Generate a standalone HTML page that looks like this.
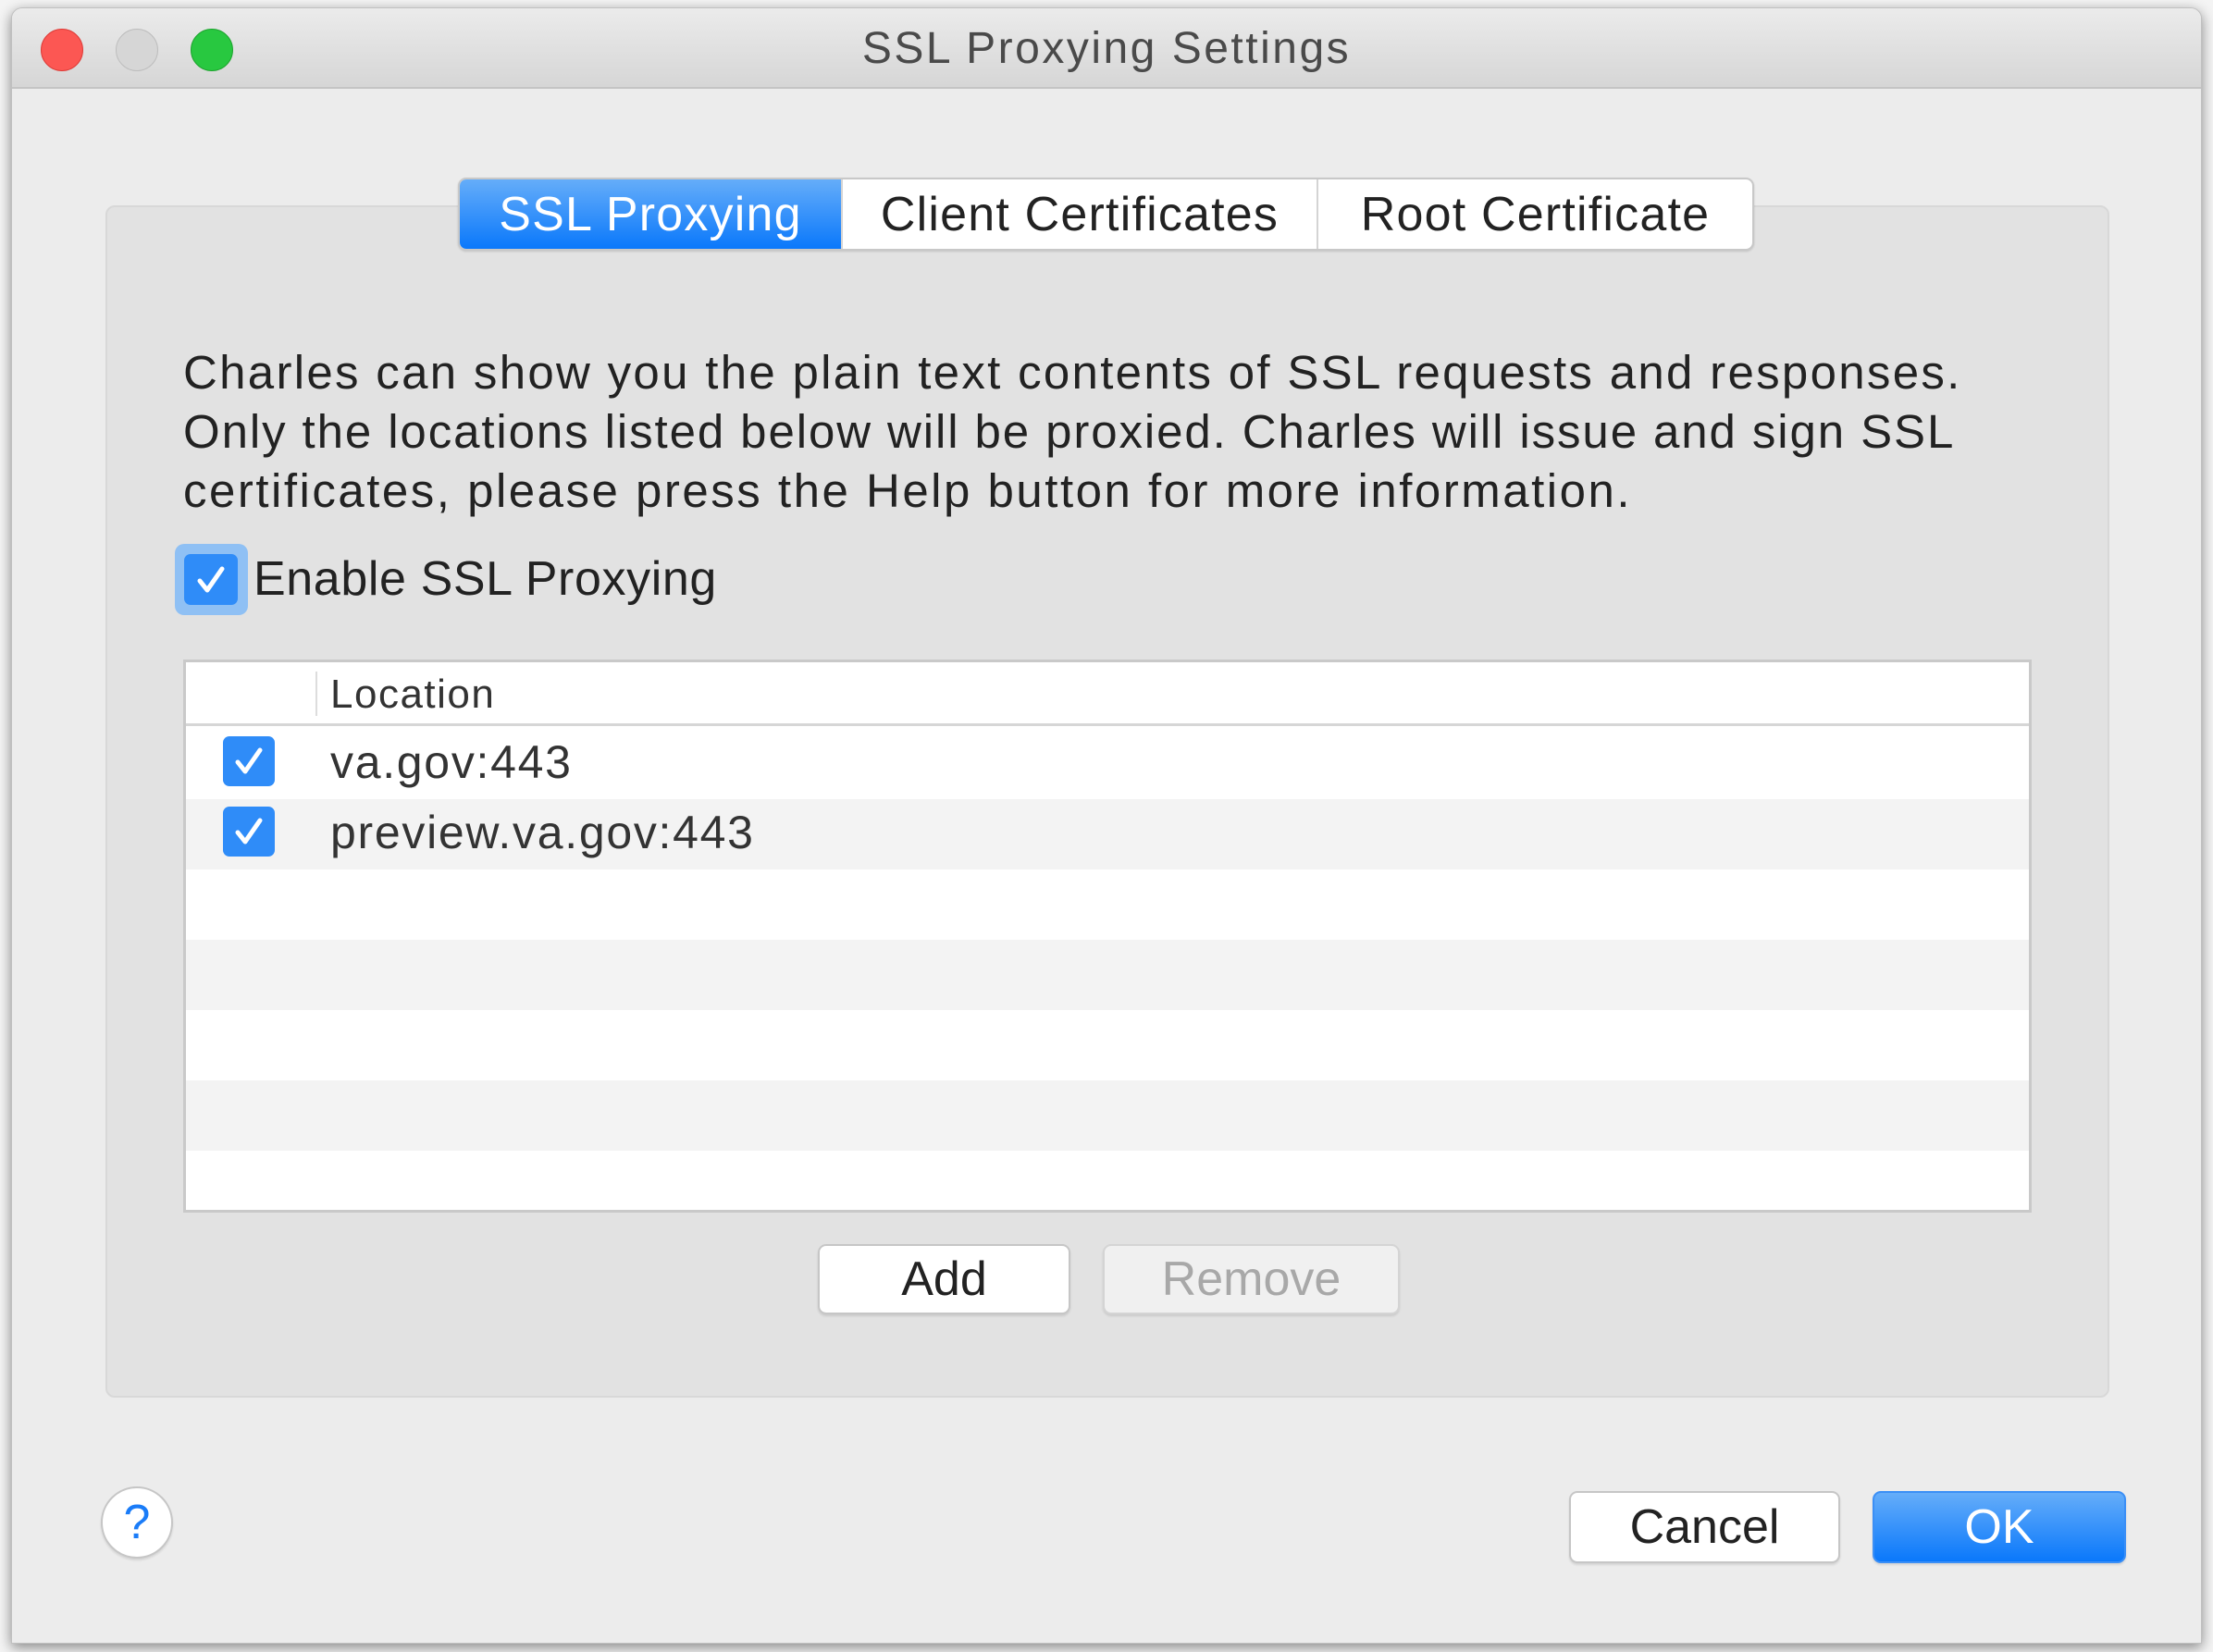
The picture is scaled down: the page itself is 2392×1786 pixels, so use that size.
<!DOCTYPE html>
<html><head><meta charset="utf-8"><style>
*{box-sizing:border-box;margin:0;padding:0}
body{width:2392px;height:1786px;background:#f4f4f4;position:relative;overflow:hidden;font-family:"Liberation Sans",sans-serif;color:#222}
.win{position:absolute;left:12px;top:8px;width:2368px;height:1769px;background:#ececec;border-radius:12px 12px 0 0;box-shadow:0 4px 14px rgba(0,0,0,.45);overflow:hidden;border:1px solid #c0c0c0}
.title{position:absolute;left:0;top:0;right:0;height:87px;background:linear-gradient(#ebebeb,#d6d6d6);border-bottom:2px solid #c4c4c4;text-align:center;font-size:48px;line-height:87px;color:#4a4a4a;letter-spacing:2.5px}
.dot{position:absolute;top:22px;width:46px;height:46px;border-radius:50%}
.abs{position:absolute}
.group{left:101px;top:213px;width:2166px;height:1289px;background:#e2e2e2;border:2px solid #d8d8d8;border-radius:10px}
.tabs{left:482px;top:183px;height:79px;width:1401px;display:flex;border:2px solid #c8c8c8;border-radius:9px;background:#fff;overflow:hidden;font-size:52px;box-shadow:0 1px 2px rgba(0,0,0,.15);letter-spacing:1.2px}
.tab{display:flex;align-items:center;justify-content:center;border-right:2px solid #d4d4d4}
.para{left:185px;top:362px;font-size:51px;line-height:64px;color:#222;letter-spacing:2.3px;white-space:nowrap}
.cb{background:#2f8cf8;border-radius:7px;display:flex;align-items:center;justify-content:center}
.table{left:185px;top:704px;width:1998px;height:598px;background:#fff;border:3px solid #c9c9c9}
.row{position:absolute;left:0;right:0;height:76px}
.btn{position:absolute;background:#fff;border:2px solid #c6c6c6;border-radius:9px;font-size:52px;display:flex;align-items:center;justify-content:center;box-shadow:0 2px 2px rgba(0,0,0,.1)}
</style></head><body>
<div class="win">
 <div class="title">SSL Proxying Settings
  <div class="dot" style="left:31px;background:#fc5753;border:1px solid #de3c38"></div>
  <div class="dot" style="left:112px;background:#d6d6d6;border:1px solid #bdbdbd"></div>
  <div class="dot" style="left:193px;background:#28c840;border:1px solid #1ea52f"></div>
 </div>
 <div class="abs group"></div>
 <div class="abs tabs">
  <div class="tab" style="width:414px;background:linear-gradient(#65adf9,#0a78fb);color:#fff">SSL Proxying</div>
  <div class="tab" style="width:514px">Client Certificates</div>
  <div class="tab" style="flex:1;border-right:0">Root Certificate</div>
 </div>
 <div class="abs para">Charles can show you the plain text contents of SSL requests and responses.<br><span style="letter-spacing:1.9px">Only the locations listed below will be proxied. Charles will issue and sign SSL</span><br><span style="letter-spacing:2.5px">certificates, please press the Help button for more information.</span></div>
 <div class="abs" style="left:176px;top:579px;width:79px;height:77px;background:#8fc0f4;border-radius:10px"></div>
 <div class="abs cb" style="left:186px;top:590px;width:58px;height:55px"><svg width="40" height="40" viewBox="0 0 40 40"><path d="M8 21 L16 31 L32 8" fill="none" stroke="#fff" stroke-width="5" stroke-linecap="round" stroke-linejoin="round"/></svg></div>
 <div class="abs" style="left:261px;top:585px;font-size:52px;line-height:64px;letter-spacing:0.6px">Enable SSL Proxying</div>
 <div class="abs table">
  <div class="row" style="top:0;height:69px;border-bottom:3px solid #d6d6d6"><div class="abs" style="left:140px;top:10px;width:2px;height:48px;background:#ddd"></div><div class="abs" style="left:156px;top:10px;font-size:44px;line-height:50px;color:#333;letter-spacing:1.5px">Location</div></div>
  <div class="row" style="top:72px"></div>
  <div class="row" style="top:148px;background:#f3f3f3"></div>
  <div class="row" style="top:224px"></div>
  <div class="row" style="top:300px;background:#f3f3f3"></div>
  <div class="row" style="top:376px"></div>
  <div class="row" style="top:452px;background:#f3f3f3"></div>
  <div class="row" style="top:528px"></div>
  <div class="abs cb" style="left:40px;top:80px;width:56px;height:54px"><svg width="40" height="40" viewBox="0 0 40 40"><path d="M8 21 L16 31 L32 8" fill="none" stroke="#fff" stroke-width="5" stroke-linecap="round" stroke-linejoin="round"/></svg></div>
  <div class="abs cb" style="left:40px;top:156px;width:56px;height:54px"><svg width="40" height="40" viewBox="0 0 40 40"><path d="M8 21 L16 31 L32 8" fill="none" stroke="#fff" stroke-width="5" stroke-linecap="round" stroke-linejoin="round"/></svg></div>
  <div class="abs" style="left:156px;top:78px;font-size:50px;line-height:60px;color:#333;letter-spacing:1.7px">va.gov:443</div>
  <div class="abs" style="left:156px;top:154px;font-size:50px;line-height:60px;color:#333;letter-spacing:1.7px">preview.va.gov:443</div>
 </div>
 <div class="btn" style="left:871px;top:1336px;width:273px;height:76px">Add</div>
 <div class="btn" style="left:1179px;top:1336px;width:321px;height:76px;background:#f0f0f0;color:#a8a8a8;border-color:#d4d4d4">Remove</div>
 <div class="abs" style="left:96px;top:1598px;width:78px;height:78px;border-radius:50%;background:#fff;border:2px solid #c6c6c6;box-shadow:0 2px 2px rgba(0,0,0,.1);color:#1a7cf8;font-size:52px;display:flex;align-items:center;justify-content:center">?</div>
 <div class="btn" style="left:1683px;top:1603px;width:293px;height:78px">Cancel</div>
 <div class="btn" style="left:2011px;top:1603px;width:274px;height:78px;background:linear-gradient(#65adf9,#0a78fb);border-color:#3b8ff6;color:#fff">OK</div>
</div>
</body></html>
